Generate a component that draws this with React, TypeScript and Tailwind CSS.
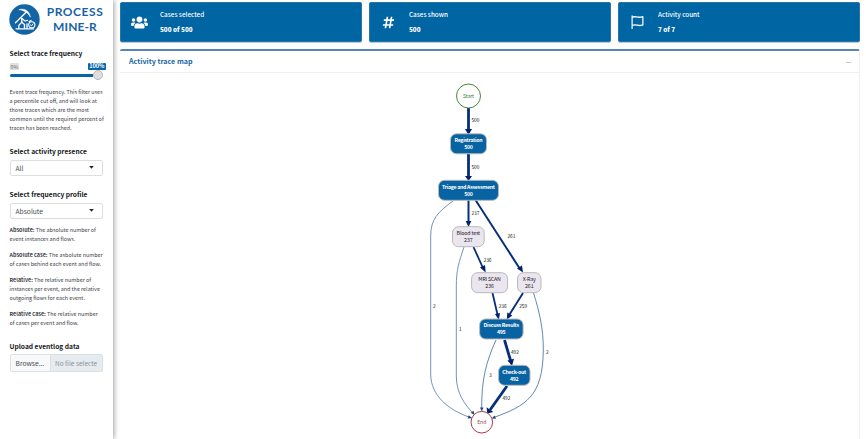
import React from "react";
import { FaUsers, FaHashtag } from "react-icons/fa";

const FONT = "font-['Noto_Sans_CJK_SC','Noto_Sans',sans-serif]";

function Logo() {
  return (
    <svg className="h-[31px] w-[31px] shrink-0" viewBox="0 0 31 31" fill="none">
      <circle cx="15.5" cy="15.5" r="15.2" fill="#1463a5" />
      <g stroke="#fff" strokeLinecap="round" strokeLinejoin="round">
        <path d="M10.3 5.6C15.5 4 20.5 6.5 21.4 13.2C19.3 9.3 16 6.8 10.3 5.6Z" fill="#fff" strokeWidth="0.5" />
        <path d="M17.3 8L6.5 18.8" strokeWidth="1.3" />
        <path d="M12.8 14.5V18.2L15.5 20.5V24.3" strokeWidth="1.4" />
        <path d="M12.8 18.2L9.8 21.5V24.3M13 14.5L16 17L18.5 16.3" strokeWidth="1.2" />
        <path d="M7 24.8H24.5M18 20V24.5M20.2 17.5L22 16.5" strokeWidth="1.3" />
        <circle cx="22.8" cy="20.8" r="3.1" strokeWidth="1.1" />
        <path d="M21.3 20.8L22.5 21.9L24.1 19.8" strokeWidth="0.9" />
      </g>
    </svg>
  );
}

function Select({ value }: { value: string }) {
  return (
    <div className="flex h-[16px] w-[93px] items-center justify-between rounded-[2px] border border-[#dcdfe2] bg-white pr-[7.5px] pl-[5px] text-[6.7px] text-[#444b52]">
      <span>{value}</span>
      <svg className="h-[3px] w-[5px]" viewBox="0 0 5 3"><path d="M0.2 0H4.8L2.5 2.8Z" fill="#222" /></svg>
    </div>
  );
}

function Heading({ children }: { children: React.ReactNode }) {
  return <h2 className="h-[10px] text-[6.65px] leading-[11px] font-bold text-[#15181b]">{children}</h2>;
}

function Sidebar() {
  return (
    <aside className="z-10 h-[439px] w-[113px] shrink-0 bg-white pl-[9.5px] whitespace-nowrap shadow-[1px_0_5px_rgba(0,0,0,0.38)]">
      <div className="-ml-[1px] flex h-[48px] pt-[4px]">
        <Logo />
        <div className="ml-[5px] w-[61px] text-center font-[Lato,sans-serif] text-[12px] leading-[15px] font-bold tracking-[0.55px] text-[#1762a5]">
          <div>PROCESS</div>
          <div className="tracking-[0.1px]">MINE-R</div>
        </div>
      </div>
      <Heading>Select trace frequency</Heading>
      <div className="mt-[4px] flex h-[8px] w-[96px] items-center justify-between text-[5.6px] leading-[7px]">
        <span className="h-[7px] rounded-[1px] bg-[#e1e1e1] px-[1px] text-[5.2px] text-[#666]">0%</span>
        <span className="h-[7px] rounded-[1px] bg-[#0863a7] px-[1px] font-bold text-white">100%</span>
      </div>
      <div className="flex h-[10px] w-[93px] items-center">
        <div className="h-[3px] flex-1 rounded-l-[2px] bg-[#0863a7]" />
        <div className="h-[10px] w-[10px] rounded-full border border-[#b8b8b8] bg-[#dedede]" />
      </div>
      <p className="mt-[8px] text-[5.4px] leading-[8.95px] text-[#3c4248]">
        Event trace frequency. This filter uses<br />a percentile cut off, and will look at<br />those traces which are the most<br />common until the required percent of<br />traces has been reached.
      </p>
      <div className="mt-[13px]"><Heading>Select activity presence</Heading></div>
      <div className="mt-[4px]"><Select value="All" /></div>
      <div className="mt-[13px]"><Heading>Select frequency profile</Heading></div>
      <div className="mt-[4px]"><Select value="Absolute" /></div>
      <div className="mt-[7px] flex flex-col gap-[7.5px] text-[5.4px] leading-[8.8px] text-[#3c4248]">
        <p><b>Absolute:</b> The absolute number of<br />event instances and flows.</p>
        <p><b>Absolute case:</b> The asbolute number<br />of cases behind each event and flow.</p>
        <p><b>Relative:</b> The relative number of<br />instances per event, and the relative<br />outgoing flows for each event.</p>
        <p><b>Relative case:</b> The relative number<br />of cases per event and flow.</p>
      </div>
      <div className="mt-[13.5px]"><Heading>Upload eventlog data</Heading></div>
      <div className="mt-[3.5px] flex h-[18px] w-[93.5px] items-center rounded-[2px] border border-[#dce0e4] bg-[#e6ebef] text-[6.7px] leading-[16px]">
        <span className="w-[40px] shrink-0 border-r border-[#dce0e4] bg-[#f8f9fa] pl-[5px] text-[#444b52]">Browse...</span>
        <span className="ml-[4.5px] text-[6.5px] text-[#8b939b]">No file selecte</span>
      </div>
    </aside>
  );
}

function Card({ icon, label, value }: { icon: React.ReactNode; label: string; value: string }) {
  return (
    <div className="h-[41px] w-[242px] rounded-[2px] bg-[#b5c9dc] pb-px">
      <div className="flex h-[40px] items-center rounded-[2px] border border-[#2875aa] bg-[#0065a3] pl-[8.5px] text-white">
        <div className="flex w-[20px] justify-center">{icon}</div>
        <div className="ml-[10.5px] text-[6.35px] leading-[15px] font-medium">
          <div>{label}</div>
          <div className="font-black">{value}</div>
        </div>
      </div>
    </div>
  );
}

type Edge = { d: string; w: number; head: string; label: string; x: number; y: number };

const edges: Edge[] = [
  { d: "M468.5 108V131", w: 2.8, head: "465,129 472,129 468.5,135", label: "500", x: 471.5, y: 122.3 },
  { d: "M468.5 154V178", w: 2.8, head: "465,176 472,176 468.5,181", label: "500", x: 471.5, y: 168.8 },
  { d: "M468.5 200V222", w: 2, head: "465.7,221 471.3,221 468.5,227", label: "237", x: 471.5, y: 214.8 },
  { d: "M475.5 200L520 269", w: 2, head: "517,268.5 522,265.5 523,272.5", label: "261", x: 507.5, y: 238.3 },
  { d: "M473.5 247L483 268", w: 1.8, head: "480,267.5 485,265 485.7,272.5", label: "236", x: 483.7, y: 261.5 },
  { d: "M492.5 293L497.6 315", w: 1.8, head: "495,314 500,313 498.8,320", label: "236", x: 498.8, y: 307.5 },
  { d: "M523 293L509.5 314.5", w: 1.9, head: "507.3,312.5 512.3,315.5 506.8,319.5", label: "259", x: 519.3, y: 307.5 },
  { d: "M504.5 340L510.7 361", w: 2.8, head: "507.5,360.5 514,358.7 512,366", label: "492", x: 511, y: 353.8 },
  { d: "M507 386L490 410", w: 2.8, head: "486.5,407.3 493.3,412 487.3,413.5", label: "492", x: 502.5, y: 399.8 },
];

const thinEdges: Edge[] = [
  { d: "M453 201C438 212 430.7 219 430.7 236V374C430.7 396 449 410 469 417", w: 0.7, head: "468.7,415.2 472.2,418.3 467.8,418.6", label: "2", x: 433, y: 307.5 },
  { d: "M464 247C459 262 456.3 270 456.3 286V376C456.3 393 465 405 472.5 412.5", w: 0.7, head: "473.5,410.7 474.5,415 470.8,412.8", label: "1", x: 459, y: 331 },
  { d: "M496 340C486 362 481.5 380 481.7 408", w: 0.8, head: "480,407.5 483.5,407.5 481.8,411.5", label: "3", x: 489, y: 376.8 },
  { d: "M533.5 293C539 310 543.5 329 543.3 350C543 397 525 406 494.5 417.2", w: 0.8, head: "494.5,415.4 496,418.7 491.7,418.6", label: "2", x: 546, y: 353.8 },
];

const nodes = [
  { x: 450.5, y: 133.8, w: 36, name: "Registration", count: "500", tl: 28, dark: true },
  { x: 438.5, y: 180.3, w: 60, name: "Triage and Assessment", count: "500", tl: 53, dark: true },
  { x: 452.5, y: 226.7, w: 31.7, name: "Blood test", count: "237", tl: 23.5, dark: false },
  { x: 471.6, y: 272.7, w: 36, name: "MRI SCAN", count: "236", tl: 22.5, dark: false },
  { x: 517.5, y: 272.7, w: 23.5, name: "X-Ray", count: "261", tl: 13, dark: false },
  { x: 479.6, y: 319, w: 43.5, name: "Discuss Results", count: "495", tl: 35.5, dark: true },
  { x: 498.6, y: 365.3, w: 31.4, name: "Check-out", count: "492", tl: 24, dark: true },
];

function TraceMap() {
  return (
    <svg className="block h-[366px] w-[740px]" viewBox="120 73 740 366">
      {thinEdges.map((e) => (
        <g key={e.d}>
          <path d={e.d} fill="none" stroke="#6587ae" strokeWidth={e.w + 0.2} />
          <polygon points={e.head} fill="#174682" />
        </g>
      ))}
      {edges.map((e) => (
        <g key={e.d}>
          <path d={e.d} fill="none" stroke="#052f78" strokeWidth={e.w} />
          <polygon points={e.head} fill="#021f70" />
        </g>
      ))}
      {[...edges, ...thinEdges].map((e) => (
        <text key={e.d} x={e.x} y={e.y} fontSize="4.8" fill="#111" textLength={e.label.length * 2.6}>{e.label}</text>
      ))}
      {nodes.map((n) => (
        <g key={n.name} textAnchor="middle" fontSize="5.25" fontWeight={n.dark ? 700 : 400} fill={n.dark ? "#fff" : "#222"}>
          <rect x={n.x} y={n.y} width={n.w} height="20" rx="6" fill={n.dark ? "#0863a3" : "#ebe5f0"} stroke="#b9b9b9" />
          <text x={n.x + n.w / 2} y={n.y + 8.4} textLength={n.tl}>{n.name}</text>
          <text x={n.x + n.w / 2} y={n.y + 15.4} textLength="8.7">{n.count}</text>
        </g>
      ))}
      <g textAnchor="middle" fontSize="5.25">
        <circle cx="468.5" cy="96" r="12" fill="#fff" stroke="#48883a" />
        <text x="468.5" y="97.7" fill="#3c7b2c" textLength="11.2">Start</text>
        <circle cx="481.8" cy="422.2" r="10.8" fill="#fff" stroke="#a63d48" />
        <text x="481.8" y="424.1" fill="#a04b55" textLength="9.3">End</text>
      </g>
    </svg>
  );
}

export default function App() {
  return (
    <div className={`flex h-[439px] w-[866px] overflow-hidden bg-white ${FONT}`}>
      <Sidebar />
      <main className="w-[753px] pt-[2px] pl-[7px]">
        <div className="flex gap-[7px] whitespace-nowrap">
          <Card icon={<FaUsers size={17} />} label="Cases selected" value="500 of 500" />
          <Card icon={<FaHashtag size={13} />} label="Cases shown" value="500" />
          <Card
            icon={
              <svg className="h-[14px] w-[13px]" viewBox="0 0 14 14" preserveAspectRatio="none" fill="none" stroke="#fff" strokeWidth="1.3" strokeLinejoin="round" strokeLinecap="round">
                <path d="M1.2 0.8V13.5M1.2 2.3C4.8 0.4 7 3.6 12.8 1.6V9.8C8 12 5.5 8.5 1.2 10.5" />
              </svg>
            }
            label="Activity count"
            value="7 of 7"
          />
        </div>
        <section className="mt-[6px] h-[390px] w-[740px] rounded-t-[2px] border-t-2 border-r border-t-[#5786b4] border-r-[#eeeeee] bg-white">
          <header className="flex h-[22px] items-center justify-between border-b border-[#eeeeee] pr-[8px] pl-[9px]">
            <h1 className="-mt-[2px] text-[7.15px] leading-[12px] font-bold text-[#1866a5]">Activity trace map</h1>
            <span className="mt-[2px] h-[1.5px] w-[5px] bg-[#bfc6cc]" />
          </header>
          <TraceMap />
        </section>
      </main>
    </div>
  );
}
